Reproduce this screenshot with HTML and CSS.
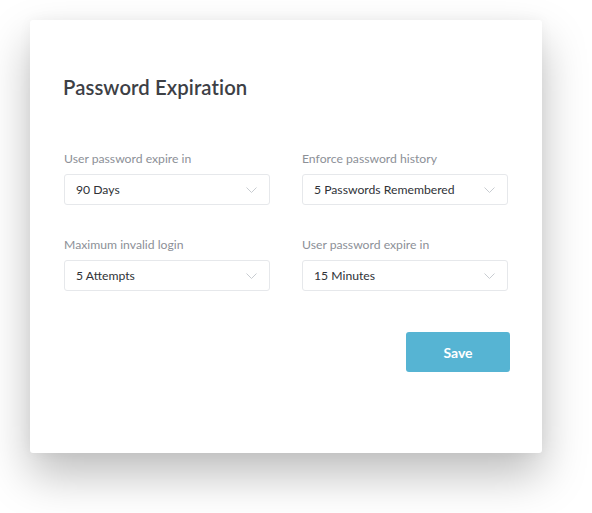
FILE: index.html
```html
<!DOCTYPE html>
<html>
<head>
<meta charset="utf-8">
<link rel="stylesheet" href="styles.css">
</head>
<body>
<div class="card">
  <h1 class="title">Password Expiration</h1>
  <div class="grid">
    <div class="field">
      <div class="label">User password expire in</div>
      <div class="select"><span>90 Days</span><svg class="chev" viewBox="0 0 11 6"><path d="M0.5 0.5 5.5 5.5 10.5 0.5"/></svg></div>
    </div>
    <div class="field">
      <div class="label">Enforce password history</div>
      <div class="select"><span>5 Passwords Remembered</span><svg class="chev" viewBox="0 0 11 6"><path d="M0.5 0.5 5.5 5.5 10.5 0.5"/></svg></div>
    </div>
    <div class="field">
      <div class="label">Maximum invalid login</div>
      <div class="select"><span>5 Attempts</span><svg class="chev" viewBox="0 0 11 6"><path d="M0.5 0.5 5.5 5.5 10.5 0.5"/></svg></div>
    </div>
    <div class="field">
      <div class="label">User password expire in</div>
      <div class="select"><span>15 Minutes</span><svg class="chev" viewBox="0 0 11 6"><path d="M0.5 0.5 5.5 5.5 10.5 0.5"/></svg></div>
    </div>
  </div>
  <div class="actions"><button class="save">Save</button></div>
</div>
</body>
</html>
```
FILE: styles.css
```css
html, body { margin: 0; padding: 0; background: #fff; }
body { padding: 20px 0 0 30px; min-height: 513px; box-sizing: border-box; font-family: "Lato", "Open Sans", sans-serif; }
.card {
  width: 512px;
  height: 433px;
  box-sizing: border-box;
  background: #fff;
  border-radius: 3px;
  box-shadow: 0 22px 45px rgba(0,0,0,0.26), 0 0 14px rgba(0,0,0,0.04);
  padding: 55px 34px 0 34px;
}
.title {
  margin: 0 0 0 -1px;
  font-size: 20.3px;
  font-weight: 600;
  color: #3d4045;
  line-height: 24px;
  letter-spacing: 0.1px;
}
.grid {
  margin-top: 52px;
  display: grid;
  grid-template-columns: 206px 206px;
  column-gap: 32px;
  row-gap: 32px;
}
.label {
  font-size: 12.2px;
  color: #8c9097;
  line-height: 16px;
  margin-bottom: 7px;
}
.select {
  height: 31px;
  box-sizing: border-box;
  border: 1px solid #e6e8eb;
  border-radius: 3px;
  display: flex;
  align-items: center;
  justify-content: space-between;
  padding: 0 12px 0 11px;
  font-size: 12.2px;
  color: #2f3237;
}
.chev { width: 11px; height: 6px; fill: none; stroke: #c8ccd1; stroke-width: 1; }
.actions { display: flex; justify-content: flex-end; margin-top: 41px; margin-right: -2px; }
.save {
  width: 104px;
  height: 40px;
  border: none;
  border-radius: 3px;
  background: #56b4d3;
  color: #fff;
  font-family: "Lato", sans-serif;
  font-size: 14px;
  font-weight: 700;
}
```
